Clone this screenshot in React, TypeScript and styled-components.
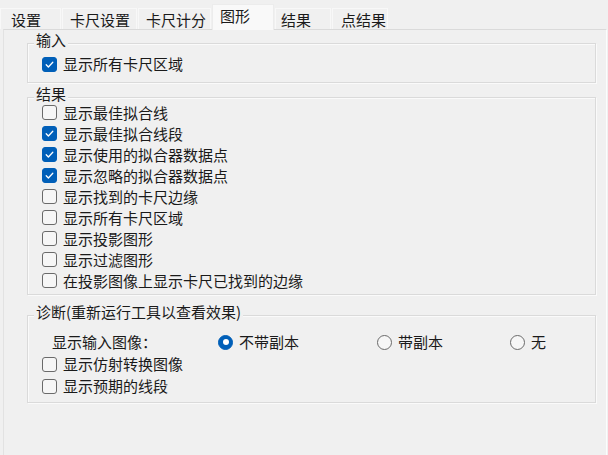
import styled, { createGlobalStyle } from 'styled-components'

const GlobalStyle = createGlobalStyle`
  html, body {
    margin: 0;
    padding: 0;
    background: #f0f0f0;
  }
  body {
    font-family: "Noto Sans CJK SC", "Noto Sans", sans-serif;
    font-size: 15px;
    color: #1a1a1a;
  }
`

const Window = styled.div`
  width: 608px;
  height: 455px;
  overflow: hidden;
  background: #f0f0f0;
  display: flex;
  flex-direction: column;
`

const TabBar = styled.div`
  display: flex;
  align-items: flex-end;
  gap: 1px;
  height: 29px;
  flex-shrink: 0;
`

const Tab = styled.div<{ $width: number; $pad: number; $active?: boolean }>`
  position: relative;
  z-index: ${(p) => (p.$active ? 1 : 0)};
  box-sizing: border-box;
  width: ${(p) => p.$width}px;
  height: ${(p) => (p.$active ? 26 : 21)}px;
  margin-bottom: ${(p) => (p.$active ? -1 : 0)}px;
  padding: ${(p) => (p.$active ? 2 : 2)}px 0 0 ${(p) => p.$pad}px;
  line-height: 18px;
  white-space: nowrap;
  background: ${(p) => (p.$active ? '#f9f9f9' : '#f0f0f0')};
  border: 1px solid ${(p) => (p.$active ? '#ececec' : '#f8f8f8')};
  border-bottom: none;
`

const Panel = styled.div`
  margin-left: 3px;
  width: 604px;
  box-sizing: border-box;
  min-height: 440px;
  flex-shrink: 0;
  border-top: 1px solid #dadada;
  border-left: 1px solid #e2e2e2;
  border-right: 1px solid #fcfcfc;
  padding: 13px 10px 0 23px;
  display: flex;
  flex-direction: column;
`

const Group = styled.div<{ $top: number; $pt: number; $pb: number }>`
  position: relative;
  box-sizing: border-box;
  width: 569px;
  margin-top: ${(p) => p.$top}px;
  padding: ${(p) => p.$pt}px 0 ${(p) => p.$pb}px 14px;
  border: 1px solid #dadada;
  box-shadow: inset 1px 1px 0 #fafafa, 1px 1px 0 #fafafa;
  display: flex;
  flex-direction: column;
`

const GroupTitle = styled.span`
  position: absolute;
  top: -13px;
  left: 6px;
  padding: 0 2px;
  line-height: 18px;
  background: #f0f0f0;
  white-space: nowrap;
`

const Row = styled.label<{ $h: number }>`
  display: flex;
  align-items: center;
  gap: 6px;
  height: ${(p) => p.$h}px;
  line-height: 18px;
  white-space: nowrap;
`

const Box = styled.span<{ $checked?: boolean }>`
  box-sizing: border-box;
  width: 15px;
  height: 15px;
  border-radius: 3px;
  flex-shrink: 0;
  display: flex;
  align-items: center;
  justify-content: center;
  background: ${(p) => (p.$checked ? '#005fb8' : '#f6f6f6')};
  border: 1px solid ${(p) => (p.$checked ? '#005fb8' : '#6a6a6a')};
`

const RadioRow = styled.div`
  display: grid;
  grid-template-columns: 166px 159px 133px 1fr;
  align-items: center;
  height: 22px;
  margin-left: 10px;
  line-height: 18px;
  white-space: nowrap;
`

const RadioItem = styled.label`
  display: flex;
  align-items: center;
  gap: 6px;
`

const Dot = styled.span<{ $checked?: boolean }>`
  box-sizing: border-box;
  width: 15px;
  height: 15px;
  border-radius: 50%;
  flex-shrink: 0;
  display: flex;
  align-items: center;
  justify-content: center;
  background: ${(p) => (p.$checked ? '#005fb8' : '#f6f6f6')};
  border: 1px solid ${(p) => (p.$checked ? '#005fb8' : '#6a6a6a')};

  &::after {
    content: '';
    display: ${(p) => (p.$checked ? 'block' : 'none')};
    width: 6px;
    height: 6px;
    border-radius: 50%;
    background: #ffffff;
  }
`

const Check = ({ checked, label, h }: { checked?: boolean; label: string; h: number }) => (
  <Row $h={h}>
    <Box $checked={checked}>
      {checked && (
        <svg width="11" height="11" viewBox="0 0 11 11">
          <polyline
            points="2.2,5.8 4.4,8 8.8,3.2"
            fill="none"
            stroke="#ffffff"
            strokeWidth="1.3"
            strokeLinecap="round"
            strokeLinejoin="round"
          />
        </svg>
      )}
    </Box>
    {label}
  </Row>
)

const tabs = [
  { label: '设置', width: 61, pad: 10 },
  { label: '卡尺设置', width: 75, pad: 7 },
  { label: '卡尺计分', width: 73, pad: 7 },
  { label: '图形', width: 62, pad: 7, active: true },
  { label: '结果', width: 56, pad: 5 },
  { label: '点结果', width: 56, pad: 8 },
]

const results = [
  { label: '显示最佳拟合线', checked: false },
  { label: '显示最佳拟合线段', checked: true },
  { label: '显示使用的拟合器数据点', checked: true },
  { label: '显示忽略的拟合器数据点', checked: true },
  { label: '显示找到的卡尺边缘', checked: false },
  { label: '显示所有卡尺区域', checked: false },
  { label: '显示投影图形', checked: false },
  { label: '显示过滤图形', checked: false },
  { label: '在投影图像上显示卡尺已找到的边缘', checked: false },
]

export default function App() {
  return (
    <Window>
      <GlobalStyle />
      <TabBar>
        {tabs.map((t) => (
          <Tab key={t.label} $width={t.width} $pad={t.pad} $active={t.active}>
            {t.label}
          </Tab>
        ))}
      </TabBar>
      <Panel>
        <Group $top={0} $pt={10} $pb={8}>
          <GroupTitle>输入</GroupTitle>
          <Check checked label="显示所有卡尺区域" h={20} />
        </Group>

        <Group $top={14} $pt={4} $pb={3}>
          <GroupTitle>结果</GroupTitle>
          {results.map((r) => (
            <Check key={r.label} checked={r.checked} label={r.label} h={21} />
          ))}
        </Group>

        <Group $top={20} $pt={15} $pb={5}>
          <GroupTitle>诊断(重新运行工具以查看效果)</GroupTitle>
          <RadioRow>
            <span>显示输入图像：</span>
            <RadioItem>
              <Dot $checked />
              不带副本
            </RadioItem>
            <RadioItem>
              <Dot />
              带副本
            </RadioItem>
            <RadioItem>
              <Dot />
              无
            </RadioItem>
          </RadioRow>
          <Check label="显示仿射转换图像" h={22} />
          <Check label="显示预期的线段" h={22} />
        </Group>
      </Panel>
    </Window>
  )
}
